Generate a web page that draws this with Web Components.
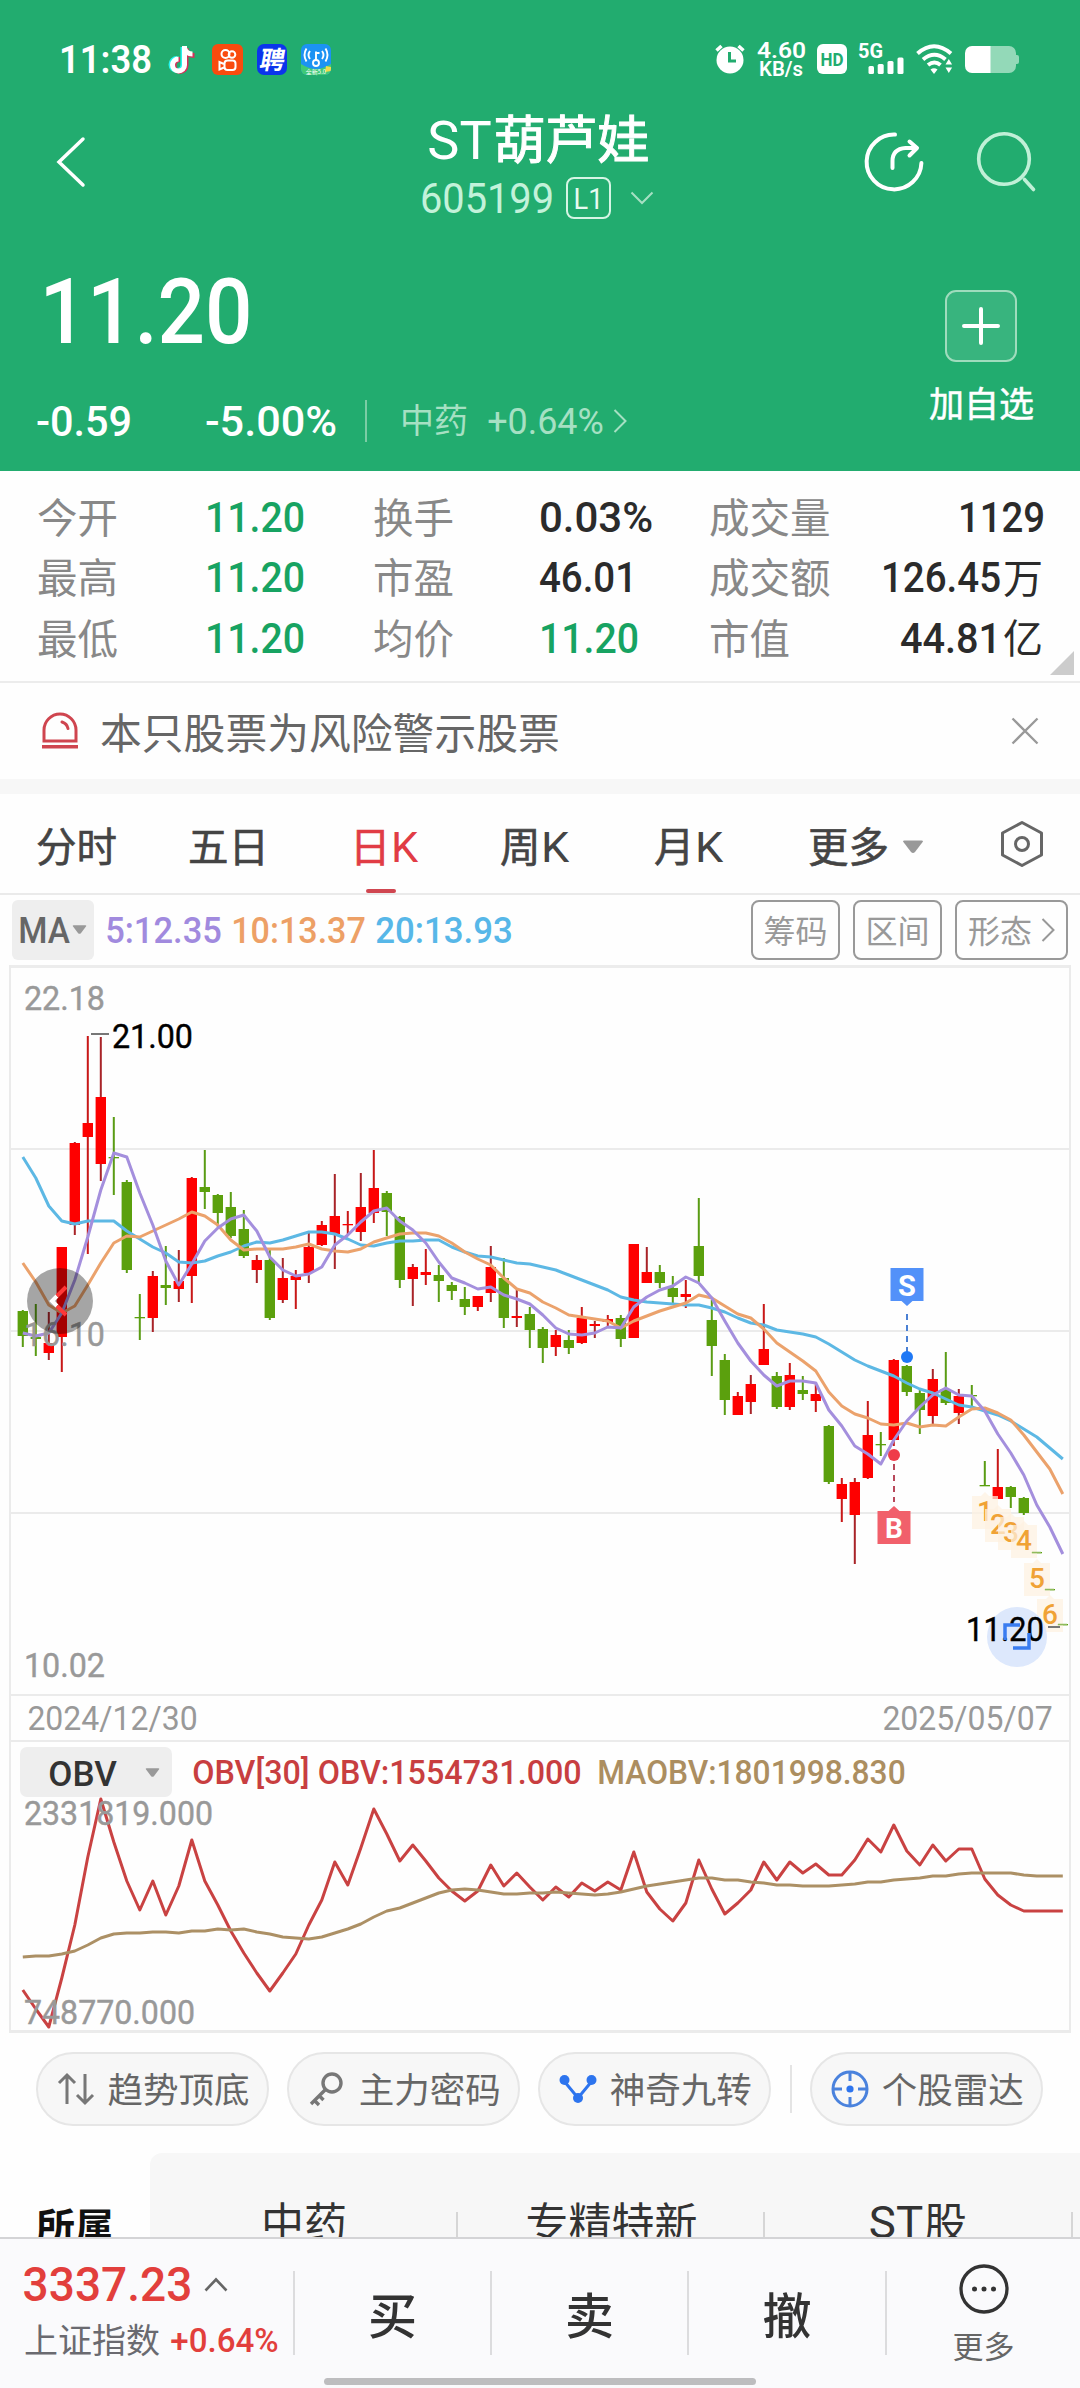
<!DOCTYPE html>
<html lang="zh-CN">
<head>
<meta charset="UTF-8">
<title>ST葫芦娃 605199</title>
<style>
    body {
        margin: 0;
        width: 1080px;
        height: 2388px;
        overflow: hidden;
        background: #fefefe;
        color: #333;
        font-family: "Noto Sans CJK SC", "Noto Sans", sans-serif;
    }
    stock-page { height: 2388px; }
</style>
</head>
<body>
<stock-page>
    <quote-header slot="header"></quote-header>
    <stat-grid></stat-grid>
    <risk-notice>本只股票为风险警示股票</risk-notice>
    <period-tabs></period-tabs>
    <ma-bar></ma-bar>
    <price-chart></price-chart>
    <date-row></date-row>
    <obv-chart></obv-chart>
    <tool-row>
        <tool-pill icon="updown">趋势顶底</tool-pill>
        <tool-pill icon="key">主力密码</tool-pill>
        <tool-pill icon="nine">神奇九转</tool-pill>
        <tool-pill icon="radar" slot="extra">个股雷达</tool-pill>
    </tool-row>
    <board-strip></board-strip>
    <trade-bar slot="footer"></trade-bar>
</stock-page>

<script>
const BASE = '<style>:host,*{box-sizing:border-box}.row{display:flex;align-items:center}ui-icon,fit-text{flex:none}</style>';

function define(name, html) {
    customElements.define(name, class extends HTMLElement {
        constructor() {
            super();
            this.attachShadow({mode: 'open'});
        }

        connectedCallback() {
            this.shadowRoot.innerHTML = BASE + (typeof html === 'function' ? html(this) : html);
        }
    });
}

// one line of latin text or digits, w = drawn width, cap = height of the capitals
define('fit-text', el => {
    const w = +el.getAttribute('w');
    const cap = +el.getAttribute('cap');
    const size = cap / 0.711;
    const weight = el.getAttribute('weight') || 500;
    return `
        <style>
            :host { display: block; line-height: 0; }
            svg { display: block; overflow: visible; }
            text { font-family: Roboto, "Liberation Sans", sans-serif; fill: currentColor; white-space: pre; }
        </style>
        <svg width="${w}" height="${cap}">
            <text x="${-size * 0.05}" y="${cap}" font-size="${size}" font-weight="${weight}"
                textLength="${w + size * 0.1}" lengthAdjust="spacingAndGlyphs">${el.textContent}</text>
        </svg>`;
});

const ICONS = {
    tiktok: [26, 28, `<g fill="none" stroke-width="5"><path stroke="#25f4ee" d="M13 2v17.500a6 6 0 1 1-6-6"/><path stroke="#d8305a" d="M16 3v17.500a6 6 0 1 1-6-6M16 4.500c1 4 4 6 8.500 6"/><path stroke="#fff" d="M14.500 1v19a6 6 0 1 1-6-6M14.500 3c1 4 4 6 8 6"/></g>`],
    kwai: [31, 31, `<rect width="31" height="31" rx="6" fill="#f94b0e"/><g fill="none" stroke="#fff" stroke-width="2"><circle cx="13.500" cy="10" r="4"/><circle cx="20" cy="10.500" r="3.300"/><rect x="12.500" y="16.500" width="11" height="9.500" rx="3"/><path d="M12 20l-4.500-2v7.500l4.500-2"/></g>`],
    pin: [30, 31, `<rect width="30" height="31" rx="7" fill="#0b35ec"/><text x="2" y="25" font-size="25" font-weight="700" fill="#fff" transform="skewX(-10) translate(4 0)">聘</text>`],
    wifikey: [30, 31, `<defs><clipPath id="k"><rect width="30" height="31" rx="6"/></clipPath></defs><g clip-path="url(#k)"><rect width="30" height="31" fill="#1c93f3"/><path d="M0 20q8 5 15 5t15-5v11H0z" fill="#3fc977"/><path d="M25 22l5 1v4l-6 1z" fill="#f2d94e"/></g><g fill="none" stroke="#fff" stroke-width="1.900"><circle cx="15" cy="19" r="3"/><path d="M15 16V7.500M15 9h3.500M9 7q-3 4 0 8M21 7q3 4 0 8M5.500 4.500q-4 6.500 0 13M24.500 4.500q4 6.500 0 13"/></g><text x="15" y="30" font-size="6" fill="#fff" text-anchor="middle">全新5.0</text>`],
    alarm: [30, 30, `<circle cx="15" cy="16" r="13.500" fill="#fff"/><path d="M1.500 6.500l5-4.500M28.500 6.500l-5-4.500" stroke="#fff" stroke-width="3.500"/><path d="M14.500 8v9h6.500" fill="none" stroke="#22ac6f" stroke-width="3"/>`],
    hd: [30, 30, `<rect width="30" height="30" rx="6" fill="#fff"/><text x="3.500" y="22" font-family="Roboto" font-size="19" font-weight="700" fill="#22ac6f" textLength="23" lengthAdjust="spacingAndGlyphs">HD</text>`],
    signal: [45, 30, `<text x="-1" y="14" font-family="Roboto" font-size="20" font-weight="700" fill="#fff" textLength="25" lengthAdjust="spacingAndGlyphs">5G</text><g fill="#fff"><rect x="9.500" y="22" width="5.500" height="8" rx="1.500"/><rect x="18.700" y="20" width="6" height="10" rx="1.500"/><rect x="28.500" y="17" width="6" height="13" rx="1.500"/><rect x="38.500" y="13.500" width="6" height="16.500" rx="1.500"/></g>`],
    wifi: [37, 30, `<g fill="none" stroke="#fff" stroke-width="4"><path d="M1.500 9.500q16.500-14.500 33.500 0"/><path d="M7 15.500q11.500-9.500 22.500 0"/><path d="M12 21q6.500-5 12.500 0"/></g><path d="M14.500 25.500q3.500-2.500 7 0L18 30z" fill="#fff"/><path d="M28 22v-4l5-6 5 6v12h-9z" fill="#22ac6f"/><path d="M29.500 20.500l3.300-5.500 3.300 5.500zM29.500 23.500l3.300 5.500 3.300-5.500z" fill="#fff"/>`],
    battery: [55, 27, `<path d="M25 0h19a7 7 0 0 1 7 7v13a7 7 0 0 1-7 7H25zM51 9h1a2 2 0 0 1 2 2v5a2 2 0 0 1-2 2h-1z" fill="#93d9b8"/><path d="M25.500 0H7a7 7 0 0 0-7 7v13a7 7 0 0 0 7 7h18.500z" fill="#fff"/>`],
    back: [28, 50, `<path d="M26 2L2 25l24 23" fill="none" stroke="#fff" stroke-width="3.500" stroke-linecap="round"/>`],
    share: [60, 60, `<g fill="none" stroke="#fff" stroke-width="4" stroke-linecap="round" stroke-linejoin="round"><path d="M31 2.600A27.400 27.400 0 1 0 57.400 31"/><path d="M28.500 36v-7q0-12 13-13h11"/><path d="M45.500 9.500L53 16l-7.500 7.500"/></g>`],
    search: [60, 60, `<g fill="none" stroke="#c0f0d7" stroke-width="3.600" stroke-linecap="round"><circle cx="28" cy="27" r="25.300"/><path d="M48.500 47.500l9 10"/></g>`],
    down: [24, 14, `<path d="M1.500 1.500L12 12 22.500 1.500" fill="none" stroke="#a6e0c3" stroke-width="2"/>`],
    more: [14, 24, `<path d="M1.500 1L12.500 12 1.500 23" fill="none" stroke="currentColor" stroke-width="2"/>`],
    plus: [38, 38, `<path d="M19 2v34M2 19h34" stroke="#fff" stroke-width="4" stroke-linecap="round"/>`],
    siren: [38, 38, `<g fill="none" stroke="#cf454f" stroke-width="3"><path d="M3 29V18a16 16 0 0 1 32 0v11z"/><path d="M21 10q5 1.500 6 6.500" stroke-linecap="round"/></g><path d="M1 33h36v3.500H1z" fill="#cf454f"/>`],
    close: [28, 28, `<path d="M1.500 1.500l25 25M26.500 1.500l-25 25" stroke="#999" stroke-width="2.300"/>`],
    hex: [44, 48, `<path d="M22 2.500L41.500 13v22L22 45.500 2.500 35V13z" fill="none" stroke="#666" stroke-width="3" stroke-linejoin="round"/><circle cx="22" cy="24" r="6.500" fill="none" stroke="#666" stroke-width="3"/>`],
    tri: [22, 14, `<path d="M1 1.500q0-1 1.500-1h17q1.500 0 1.500 1L13 12q-2 2-4 0z" fill="#999"/>`],
    updown: [38, 34, `<path d="M10 32V3M2 11l8-8 8 8M28 2v29M20 23l8 8 8-8" fill="none" stroke="#777" stroke-width="3"/>`],
    key: [36, 36, `<g fill="none" stroke="#777" stroke-width="3.400"><circle cx="24" cy="12" r="9"/><path d="M18 18L3 33M6.500 29.500l4.500 4.500M11 24.500l4.500 4.500"/></g>`],
    nine: [38, 34, `<path d="M5 9l14 17L33 9" fill="none" stroke="#2d74ee" stroke-width="3"/><g fill="#2d74ee"><circle cx="5.500" cy="8" r="5"/><circle cx="32.500" cy="8" r="5"/><circle cx="19" cy="26" r="5"/></g>`],
    radar: [38, 38, `<circle cx="19" cy="19" r="17" fill="none" stroke="#4a82dd" stroke-width="3"/><circle cx="19" cy="19" r="3.600" fill="#2d74ee"/><path d="M19 2v9M19 27v9M2 19h9M27 19h9" stroke="#4a82dd" stroke-width="3"/>`],
    up: [24, 15, `<path d="M1.500 13.500L12 2.500l10.500 11" fill="none" stroke="#666" stroke-width="2.600"/>`],
    dots: [50, 50, `<circle cx="25" cy="25" r="23" fill="none" stroke="#333" stroke-width="3.300"/><g fill="#333"><circle cx="15.500" cy="25" r="2.500"/><circle cx="25" cy="25" r="2.500"/><circle cx="34.500" cy="25" r="2.500"/></g>`]
};

define('ui-icon', el => {
    const [w, h, body] = ICONS[el.getAttribute('name')];
    const width = el.getAttribute('width') || w;
    return `
        <style>:host { display: block; line-height: 0; } svg { display: block; overflow: visible; }</style>
        <svg width="${width}" height="${h * width / w}" viewBox="0 0 ${w} ${h}">${body}</svg>`;
});

define('stock-page', `
    <style>
        :host { display: flex; flex-direction: column; }
        main { flex: 1; min-height: 0; overflow: hidden; }
    </style>
    <slot name="header"></slot>
    <main><slot></slot></main>
    <slot name="footer"></slot>`);

define('status-bar', `
    <style>
        :host { display: flex; align-items: center; height: 90px; padding: 28px 60px 0 61px; color: #fff; }
        .apps { gap: 14px; margin-left: 20px; flex: 1; }
        .apps :first-child { margin-right: 2px; }
        .net { width: 48px; display: flex; flex-direction: column; align-items: center; gap: 5px; margin: 0 12px; }
        .signal { margin: 0 12px; }
        .battery { margin-left: 12px; }
    </style>
    <fit-text w="89" cap="28" weight="600">11:38</fit-text>
    <div class="row apps">
        <ui-icon name="tiktok"></ui-icon>
        <ui-icon name="kwai"></ui-icon>
        <ui-icon name="pin"></ui-icon>
        <ui-icon name="wifikey"></ui-icon>
    </div>
    <ui-icon name="alarm"></ui-icon>
    <div class="net">
        <fit-text w="47" cap="15.500" weight="600">4.60</fit-text>
        <fit-text w="42" cap="14" weight="600">KB/s</fit-text>
    </div>
    <ui-icon name="hd"></ui-icon>
    <ui-icon class="signal" name="signal"></ui-icon>
    <ui-icon name="wifi"></ui-icon>
    <ui-icon class="battery" name="battery"></ui-icon>`);

define('quote-header', `
    <style>
        :host { display: block; flex: none; height: 471px; background: #22ac6f; color: #fff; }
        nav { display: grid; grid-template-columns: 361px 244px 1fr; height: 144px; padding: 0 44px 0 57px; align-items: center; }
        .title { padding-top: 12px; }
        h1 { margin: 0; font-size: 52px; line-height: 60px; font-weight: 400; -webkit-text-stroke: 1px currentColor; display: flex; justify-content: center; align-items: center; gap: 4px; white-space: nowrap; }
        h1 span { position: relative; top: -3px; }
        .code { height: 56px; gap: 14px; padding-left: 4px; color: #c3f2da; }
        .level { width: 45px; height: 42px; border: 2.500px solid #d5f5e4; border-radius: 8px; display: grid; place-items: center; color: #e8fbf1; }
        .code ui-icon { margin-left: 5px; }
        .tools { justify-content: flex-end; gap: 52px; }
        .quote { display: flex; justify-content: space-between; padding: 0 46px 0 38px; }
        .price { padding: 44px 0 0 6px; }
        .sub { height: 42px; margin-top: 57px; }
        .sub .pct { margin-left: 77px; }
        .sector { border-left: 2px solid #7bcda5; height: 42px; margin-left: 30px; padding-left: 33px; color: #a6e0c3; font-size: 34px; line-height: 42px; }
        .sector fit-text { margin: 0 11px 0 21px; }
        .sector span { position: relative; top: -2px; }
        .add { padding-top: 56px; display: flex; flex-direction: column; align-items: center; font-size: 35px; -webkit-text-stroke: .5px currentColor; line-height: 40px; gap: 20px; }
        .add div { width: 72px; height: 72px; border: 2px solid #9fdcbd; border-radius: 11px; background: #38b47e; display: grid; place-items: center; }
    </style>
    <status-bar></status-bar>
    <nav>
        <ui-icon name="back"></ui-icon>
        <div class="title">
            <h1><fit-text w="59" cap="38" weight="400">ST</fit-text><span>葫芦娃</span></h1>
            <div class="row code">
                <fit-text w="130" cap="30" weight="400">605199</fit-text>
                <div class="level"><fit-text w="27" cap="21" weight="400">L1</fit-text></div>
                <ui-icon name="down"></ui-icon>
            </div>
        </div>
        <div class="row tools">
            <ui-icon name="share"></ui-icon>
            <ui-icon name="search"></ui-icon>
        </div>
    </nav>
    <div class="quote">
        <div>
            <div class="price"><fit-text w="204" cap="65">11.20</fit-text></div>
            <div class="row sub">
                <fit-text w="92" cap="30">-0.59</fit-text>
                <fit-text class="pct" w="128" cap="30">-5.00%</fit-text>
                <div class="row sector"><span>中药</span><fit-text w="113" cap="26" weight="400">+0.64%</fit-text><ui-icon name="more"></ui-icon></div>
            </div>
        </div>
        <div class="add"><div><ui-icon name="plus"></ui-icon></div>加自选</div>
    </div>`);

define('stat-grid', () => {
    // label, value, width, unit, green
    const rows = [
        [['今开', '11.20', 96, '', 1], ['换手', '0.03%', 110], ['成交量', '1129', 83]],
        [['最高', '11.20', 96, '', 1], ['市盈', '46.01', 94], ['成交额', '126.45', 116, '万']],
        [['最低', '11.20', 96, '', 1], ['均价', '11.20', 96, '', 1], ['市值', '44.81', 97, '亿']]
    ];
    const cell = ([label, value, w, unit, green]) => `
        <span class="label">${label}</span>
        <div class="row value ${green ? 'green' : ''}"><fit-text w="${w}" cap="30">${value}</fit-text>${unit ? `<b>${unit}</b>` : ''}</div>`;
    return `
        <style>
            :host { display: block; position: relative; height: 212px; padding: 16px 37px 0 37px; border-bottom: 2px solid #ececec; }
            .line { display: grid; grid-template-columns: 170px 166px 168px 168px 150px 184px; height: 60.300px; align-items: center; }
            .label { color: #888; font-size: 40.500px; line-height: 60px; margin-top: -2px; white-space: nowrap; }
            .value { color: #2b2b2b; gap: 4px; }
            .value:last-child { justify-content: flex-end; }
            .green { color: #17a362; }
            b { font-weight: 400; font-size: 40px; line-height: 50px; margin-top: -3px; }
            .corner { position: absolute; right: 6px; bottom: 6px; border-left: 24px solid transparent; border-bottom: 24px solid #ccc; }
        </style>
        ${rows.map(r => `<div class="line">${r.map(cell).join('')}</div>`).join('')}
        <div class="corner"></div>`;
});

define('risk-notice', `
    <style>
        :host { display: flex; align-items: center; height: 111px; padding: 0 41px 0 41px; border-bottom: 15px solid #f7f7f7; color: #666; }
        .text { flex: 1; margin: 0 0 0 21px; font-size: 41.800px; line-height: 60px; }
    </style>
    <ui-icon name="siren"></ui-icon>
    <div class="text"><slot></slot></div>
    <ui-icon name="close"></ui-icon>`);

define('period-tabs', `
    <style>
        :host { display: flex; align-items: center; height: 101px; padding: 0 36px; border-bottom: 2px solid #eaeaea; font-size: 40.500px; -webkit-text-stroke: .6px currentColor; color: #444; }
        .tab { display: flex; align-items: center; gap: 2px; height: 99px; padding-top: 7px; position: relative; white-space: nowrap; }
        .tab span { line-height: 60px; margin-top: -4px; }
        .on { color: #e13c45; }
        .on::after { content: ""; position: absolute; bottom: 0; left: 16px; width: 30px; height: 4px; border-radius: 2px; background: #d04650; }
        ui-icon.hex { margin-left: auto; }
    </style>
    <div class="tab" style="width:152px"><span>分时</span></div>
    <div class="tab" style="width:162px"><span>五日</span></div>
    <div class="tab on" style="width:150px"><span>日</span><fit-text w="23" cap="30" weight="400">K</fit-text></div>
    <div class="tab" style="width:154px"><span>周</span><fit-text w="24" cap="30" weight="400">K</fit-text></div>
    <div class="tab" style="width:154px"><span>月</span><fit-text w="24" cap="30" weight="400">K</fit-text></div>
    <div class="tab" style="gap:13px"><span>更多</span><ui-icon name="tri"></ui-icon></div>
    <ui-icon class="hex" name="hex"></ui-icon>`);

define('ma-bar', `
    <style>
        :host { display: flex; align-items: center; height: 70px; padding: 0 12px; }
        .pick { width: 82px; height: 60px; background: #eee; border-radius: 6px; color: #666; justify-content: center; gap: 4px; }
        .values { flex: 1; padding-left: 13px; gap: 13px; }
        .btn { height: 60px; width: 89px; border: 2px solid #999; border-radius: 8px; color: #999; font-size: 32px; justify-content: center; padding-bottom: 2px; margin-left: 13px; }
        .wide { width: 113px; gap: 9px; }
        .btn ui-icon { margin-top: 2px; }
    </style>
    <div class="row pick"><fit-text w="48" cap="26">MA</fit-text><ui-icon name="tri" width="15"></ui-icon></div>
    <div class="row values">
        <fit-text w="113" cap="26" style="color:#a18ade">5:12.35</fit-text>
        <fit-text w="131" cap="26" style="color:#eda066">10:13.37</fit-text>
        <fit-text w="134" cap="26" style="color:#57b7e8">20:13.93</fit-text>
    </div>
    <div class="row btn">筹码</div>
    <div class="row btn">区间</div>
    <div class="row btn wide">形态<ui-icon name="more"></ui-icon></div>`);

const STEP = 13;
const X0 = 22.8;

const points = list => list.map((y, i) => `${(X0 + i * STEP).toFixed(1)},${y}`).join(' ');

const label = (x, y, w, text, fill = '#999', size = 33) =>
    `<text x="${x - 2}" y="${y}" font-size="${size}" fill="${fill}" stroke="${fill}" stroke-width=".4" textLength="${w + 4}" lengthAdjust="spacingAndGlyphs">${text}</text>`;

// [up, high, top, bottom, low] in chart pixels
const CANDLES = [
    [0,345,346,371,382],[0,339,372,374,391],[1,347,378,388,395],[1,282,282,372,407],[1,177,178,260,270],
    [1,71,158,172,289],[1,72,132,199,216],[0,152,192,193,230],[0,215,217,305,308],[0,329,352,353,375],
    [1,306,311,353,367],[0,281,320,323,340],[1,285,316,324,337],[1,212,213,311,338],[0,185,222,227,244],
    [0,229,230,248,262],[0,227,242,271,273],[0,245,264,291,293],[1,290,295,305,318],[0,285,295,353,355],
    [1,293,313,335,338],[1,305,311,315,344],[1,268,282,308,318],[1,256,260,280,281],[1,209,251,269,304],
    [1,246,259,260,270],[1,208,242,267,276],[1,185,223,248,258],[0,226,228,247,271],[0,251,252,315,323],
    [1,299,302,314,341],[1,284,307,310,320],[0,300,310,316,337],[0,317,320,326,335],[0,322,334,342,350],
    [1,331,331,342,346],[1,281,302,328,337],[0,293,313,353,363],[1,325,351,353,362],[0,342,349,365,383],
    [0,362,364,383,398],[1,365,370,382,391],[0,365,375,383,389],[1,342,353,378,379],[1,356,359,361,373],
    [1,350,354,357,362],[0,350,353,374,382],[1,279,279,373,373],[1,282,307,318,318],[0,300,307,318,323],
    [0,311,323,332,338],[1,315,329,332,343],[0,233,281,311,319],[0,335,355,381,411],[0,389,395,435,450],
    [1,427,431,450,450],[1,410,419,437,449],[1,339,384,400,400],[0,407,411,442,444],[1,398,410,442,445],
    [0,411,425,429,435],[1,418,429,436,447],[0,460,461,517,519],[1,513,519,534,557],[1,513,517,550,599],
    [1,436,470,513,514],[0,467,479,480,491],[1,394,395,475,481],[0,400,401,427,431],[0,425,428,445,469],
    [1,404,414,451,459],[0,387,424,438,440],[1,424,431,448,459],[0,420,430,431,441],[0,496,520,521,521],
    [1,484,522,534,534],[0,521,522,532,543],[0,532,533,548,550],[0,587,587,588,588],[0,624,624,625,625],
    [0,659,659,660,660]
];

const MA5 = [368,371,368,348,315,272,225,188,192,228,260,296,320,299,276,263,254,250,266,292,305,311,309,302,280,270,257,246,243,256,265,278,297,313,318,324,322,330,334,339,350,363,369,370,368,362,363,342,332,325,321,312,318,333,356,378,396,410,421,416,416,418,445,461,481,489,499,475,456,442,430,423,430,431,446,469,488,510,540,562,589];
const MA10 = [298,317,340,348,341,320,298,278,271,272,266,260,254,247,251,260,275,285,284,284,284,282,279,284,286,287,284,277,273,269,268,268,271,278,287,294,300,313,324,328,337,343,350,352,354,356,363,356,351,346,342,338,330,333,341,349,353,364,378,387,396,406,427,441,449,453,459,460,458,462,460,461,452,444,443,448,455,470,487,504,529];
const MA20 = [192,213,241,256,259,256,256,256,266,274,282,288,297,298,296,291,287,281,277,278,275,271,267,267,269,274,280,281,278,276,276,275,275,282,287,291,292,295,298,299,302,305,310,315,320,325,332,335,337,338,339,340,340,343,347,353,358,360,365,367,369,372,379,387,395,401,406,411,418,424,428,434,440,442,446,450,456,464,472,483,494];

function candle([up, high, top, bottom, low], i) {
    const x = X0 + i * STEP;
    const body = up ? '#fe0000' : '#5ba00d';
    const wick = up ? (i % 2 ? '#c81818' : '#a82428') : '#5a9c14';
    const flat = bottom - top < 2;
    return `<rect x="${(x - 1).toFixed(1)}" y="${high}" width="2" height="${low - high}" fill="${wick}"/>` +
        `<rect x="${(x - 5.200).toFixed(1)}" y="${top}" width="10.400" height="${flat ? 1.300 : bottom - top}" fill="${body}"/>`;
}

// number of the day in the nine-turn sequence, drawn under its candle
const turn = (n, x, y) => `
    <path d="M${x - 13} ${y - 5}h9l4-4 4 4h9v33h-26z" fill="#fdf1e1" fill-opacity=".72"/>
    <text x="${x}" y="${y + 20}" font-size="28" font-weight="500" text-anchor="middle" fill="#f0a235">${n}</text>`;

define('price-chart', () => `
    <style>
        :host { display: block; height: 731px; }
        svg { display: block; font-family: Roboto, sans-serif; }
        polyline { fill: none; stroke-width: 3; stroke-linejoin: round; }
    </style>
    <svg width="1080" height="731">
        <path d="M9 1.500H1071" stroke="#ececec" stroke-width="3"/>
        <path d="M10 0V731M1070 0V731M10 184H1070M10 366H1070M10 548H1070M10 730H1070" stroke="#ebebeb" stroke-width="2"/>
        ${CANDLES.map(candle).join('')}
        <polyline points="${points(MA20)}" stroke="#5db8e4"/>
        <polyline points="${points(MA10)}" stroke="#eba26c"/>
        <polyline points="${points(MA5)}" stroke="#a48fdd"/>
        ${label(26, 45, 77, '22.18')}
        ${label(26, 381, 77, '16.10')}
        ${label(26, 712, 77, '10.02')}
        <path d="M91 69H109" stroke="#777" stroke-width="2"/>
        ${label(114, 83, 77, '21.00', '#000')}

        <path d="M907 349V388" stroke="#4a80d4" stroke-width="2" stroke-dasharray="6 5"/>
        <circle cx="907" cy="392" r="6" fill="#1f78f5"/>
        <path d="M890.500 303h33v33h-11l-5.500 5-5.500-5h-11z" fill="#5291f9"/>
        <text x="907" y="331" font-size="29" font-weight="700" text-anchor="middle" fill="#fff">S</text>
        <path d="M894 499V537" stroke="#b8485a" stroke-width="2" stroke-dasharray="6 5"/>
        <circle cx="894" cy="490" r="6" fill="#ef3b49"/>
        <path d="M877.500 546h11l5.500-5 5.500 5h11v33h-33z" fill="#f1606b"/>
        <text x="894" y="573" font-size="28" font-weight="700" text-anchor="middle" fill="#fff">B</text>

        ${turn(1, 985, 536)}${turn(2, 998, 549)}${turn(3, 1011, 557)}${turn(4, 1024, 565)}${turn(5, 1037, 603)}${turn(6, 1050, 639)}
        <path d="M1032 587.500h9M1045 624.500h9M1058 659.500h9" stroke="#8fbb5c" stroke-width="1.500"/>
        <path d="M1048 662h12" stroke="#777" stroke-width="2"/>

        <circle cx="60" cy="336" r="33" fill="#000" fill-opacity=".35"/>
        <path d="M57 331l-5 5 5 5" fill="none" stroke="#fff" stroke-width="4"/>
        <path d="M66 322l-9 9M57 341l9 9" stroke="#ff3838" stroke-width="4"/>
        <circle cx="1017" cy="672" r="30" fill="#dde8fc"/>
        ${label(968, 676, 74, '11.20', '#000')}
        <path d="M1005 675V660H1020M1029 668V683H1013" fill="none" stroke="#3a7cf0" stroke-width="3.500"/>
    </svg>`);

define('date-row', `
    <style>
        :host { display: flex; align-items: center; justify-content: space-between; height: 46px; padding: 0 18px; margin: 0 9px; border: solid #ebebeb; border-width: 0 2px 2px; color: #999; }
    </style>
    <fit-text w="167" cap="23" weight="400">2024/12/30</fit-text>
    <fit-text w="167" cap="23" weight="400">2025/05/07</fit-text>`);

const OBV = [248,267,285,236,183,115,57,100,139,168,139,173,144,98,139,163,189,211,231,249,231,212,183,158,120,143,106,67,92,119,103,119,136,149,159,149,123,144,131,145,158,145,155,141,149,140,148,110,150,167,179,161,118,147,172,161,148,120,138,120,131,122,133,133,118,97,110,83,109,123,103,119,107,107,137,153,163,169,169,169,169];
const MAOBV = [215,214,214,212,209,203,196,192,191,191,190,190,191,189,189,187,188,187,190,192,195,196,197,195,191,187,182,175,169,166,161,156,151,148,147,148,150,152,152,151,151,150,151,152,153,152,150,147,144,142,140,138,136,136,138,138,140,141,143,143,144,144,144,143,142,140,140,138,137,136,134,134,132,131,131,131,131,133,134,134,134];

define('obv-chart', () => `
    <style>
        :host { display: grid; height: 291px; }
        .head, svg { grid-area: 1 / 1; }
        .head { align-self: start; height: 50px; margin: 5px 0 0 20px; }
        .pick { width: 152px; height: 50px; border-radius: 7px; background: #eee; color: #333; padding: 2px 12px 0 30px; justify-content: space-between; margin-right: 22px; }
        svg { display: block; font-family: Roboto, sans-serif; }
        polyline { fill: none; stroke-width: 3; stroke-linejoin: round; }
    </style>
    <svg width="1080" height="291">
        <path d="M10 0V290M1070 0V290" stroke="#ebebeb" stroke-width="2"/>
        <path d="M9 289.500H1071" stroke="#ebebeb" stroke-width="3"/>
        <polyline points="${points(OBV)}" stroke="#c94242"/>
        <polyline points="${points(MAOBV)}" stroke="#ac9065"/>
        ${label(26, 83, 185, '2331819.000')}
        ${label(26, 282, 167, '748770.000')}
    </svg>
    <div class="row head">
        <div class="row pick"><fit-text w="65" cap="25">OBV</fit-text><ui-icon name="tri" width="15"></ui-icon></div>
        <fit-text w="386" cap="24" style="color:#c83e40">OBV[30] OBV:1554731.000</fit-text>
        <fit-text w="305" cap="24" style="color:#ac8e60;margin-left:19px">MAOBV:1801998.830</fit-text>
    </div>`);

define('tool-row', `
    <style>
        :host { display: flex; align-items: center; gap: 18.700px; padding: 19px 36px 27px; }
        i { width: 2px; height: 48px; background: #e4e4e4; }
    </style>
    <slot></slot><i></i><slot name="extra"></slot>`);

define('tool-pill', el => `
    <style>
        :host { display: flex; align-items: center; justify-content: space-between; width: 232.500px; height: 74px; padding: 0 17px 0 19px; border: 2px solid #e6e6e6; border-radius: 37px; background: #f7f7f7; color: #666; font-size: 35.500px; line-height: 50px; }
        span { margin-top: -2px; }
    </style>
    <ui-icon name="${el.getAttribute('icon')}"></ui-icon>
    <span><slot></slot></span>`);

define('board-strip', `
    <style>
        :host { display: flex; height: 150px; }
        h2 { margin: 0; width: 150px; padding: 41px 0 0 36px; font-size: 39px; line-height: 60px; font-weight: 700; color: #111; }
        .list { flex: 1; display: grid; grid-template-columns: 308px 307px 308px; background: #f7f7f7; border-radius: 12px 0 0 0; font-size: 43px; line-height: 60px; color: #333; padding-top: 37px; }
        .list div { display: flex; justify-content: center; align-items: center; height: 60px; position: relative; white-space: nowrap; }
        .list div::after { content: ""; position: absolute; right: 0; top: 22px; width: 2px; height: 40px; background: #d6d6d6; }
        .list fit-text { margin: 4px 3px 0 0; }
    </style>
    <h2>所属</h2>
    <div class="list">
        <div>中药</div>
        <div>专精特新</div>
        <div><fit-text w="50" cap="31" weight="400">ST</fit-text>股</div>
    </div>`);

define('trade-bar', `
    <style>
        :host { display: block; flex: none; position: relative; height: 151px; border-top: 2px solid #d4d4d6; background: #fafafc; }
        .bar { display: grid; grid-template-columns: 293px 197px 197px 198px 1fr; padding-top: 32px; }
        .bar > div { height: 84px; }
        .index { padding-left: 25px; }
        .index .value { height: 34px; margin-top: -4px; gap: 14px; color: #e23f3c; }
        .name { margin: 13px 0 0 -1px; font-size: 34px; line-height: 50px; color: #6a6a70; white-space: nowrap; }
        .name fit-text { margin: 2px 0 0 12px; color: #e23f3c; }
        .act { border-left: 2px solid #dcdcde; display: grid; place-items: center; font-size: 49px; line-height: 80px; font-weight: 500; color: #333; }
        .act span { margin-top: -1px; }
        .more { border-left: 2px solid #dcdcde; display: flex; flex-direction: column; align-items: center; font-size: 31px; line-height: 40px; gap: 11px; color: #666; }
        .more ui-icon { margin-top: -7px; }
        .home { position: absolute; left: 324px; bottom: 3px; width: 432px; height: 7px; border-radius: 4px; background: #bdbdbf; }
    </style>
    <div class="bar">
        <div class="index">
            <div class="row value"><fit-text w="165" cap="34">3337.23</fit-text><ui-icon name="up"></ui-icon></div>
            <div class="row name">上证指数<fit-text w="105" cap="24">+0.64%</fit-text></div>
        </div>
        <div class="act"><span>买</span></div>
        <div class="act"><span>卖</span></div>
        <div class="act"><span>撤</span></div>
        <div class="more"><ui-icon name="dots"></ui-icon>更多</div>
    </div>
    <div class="home"></div>`);
</script>
</body>
</html>
